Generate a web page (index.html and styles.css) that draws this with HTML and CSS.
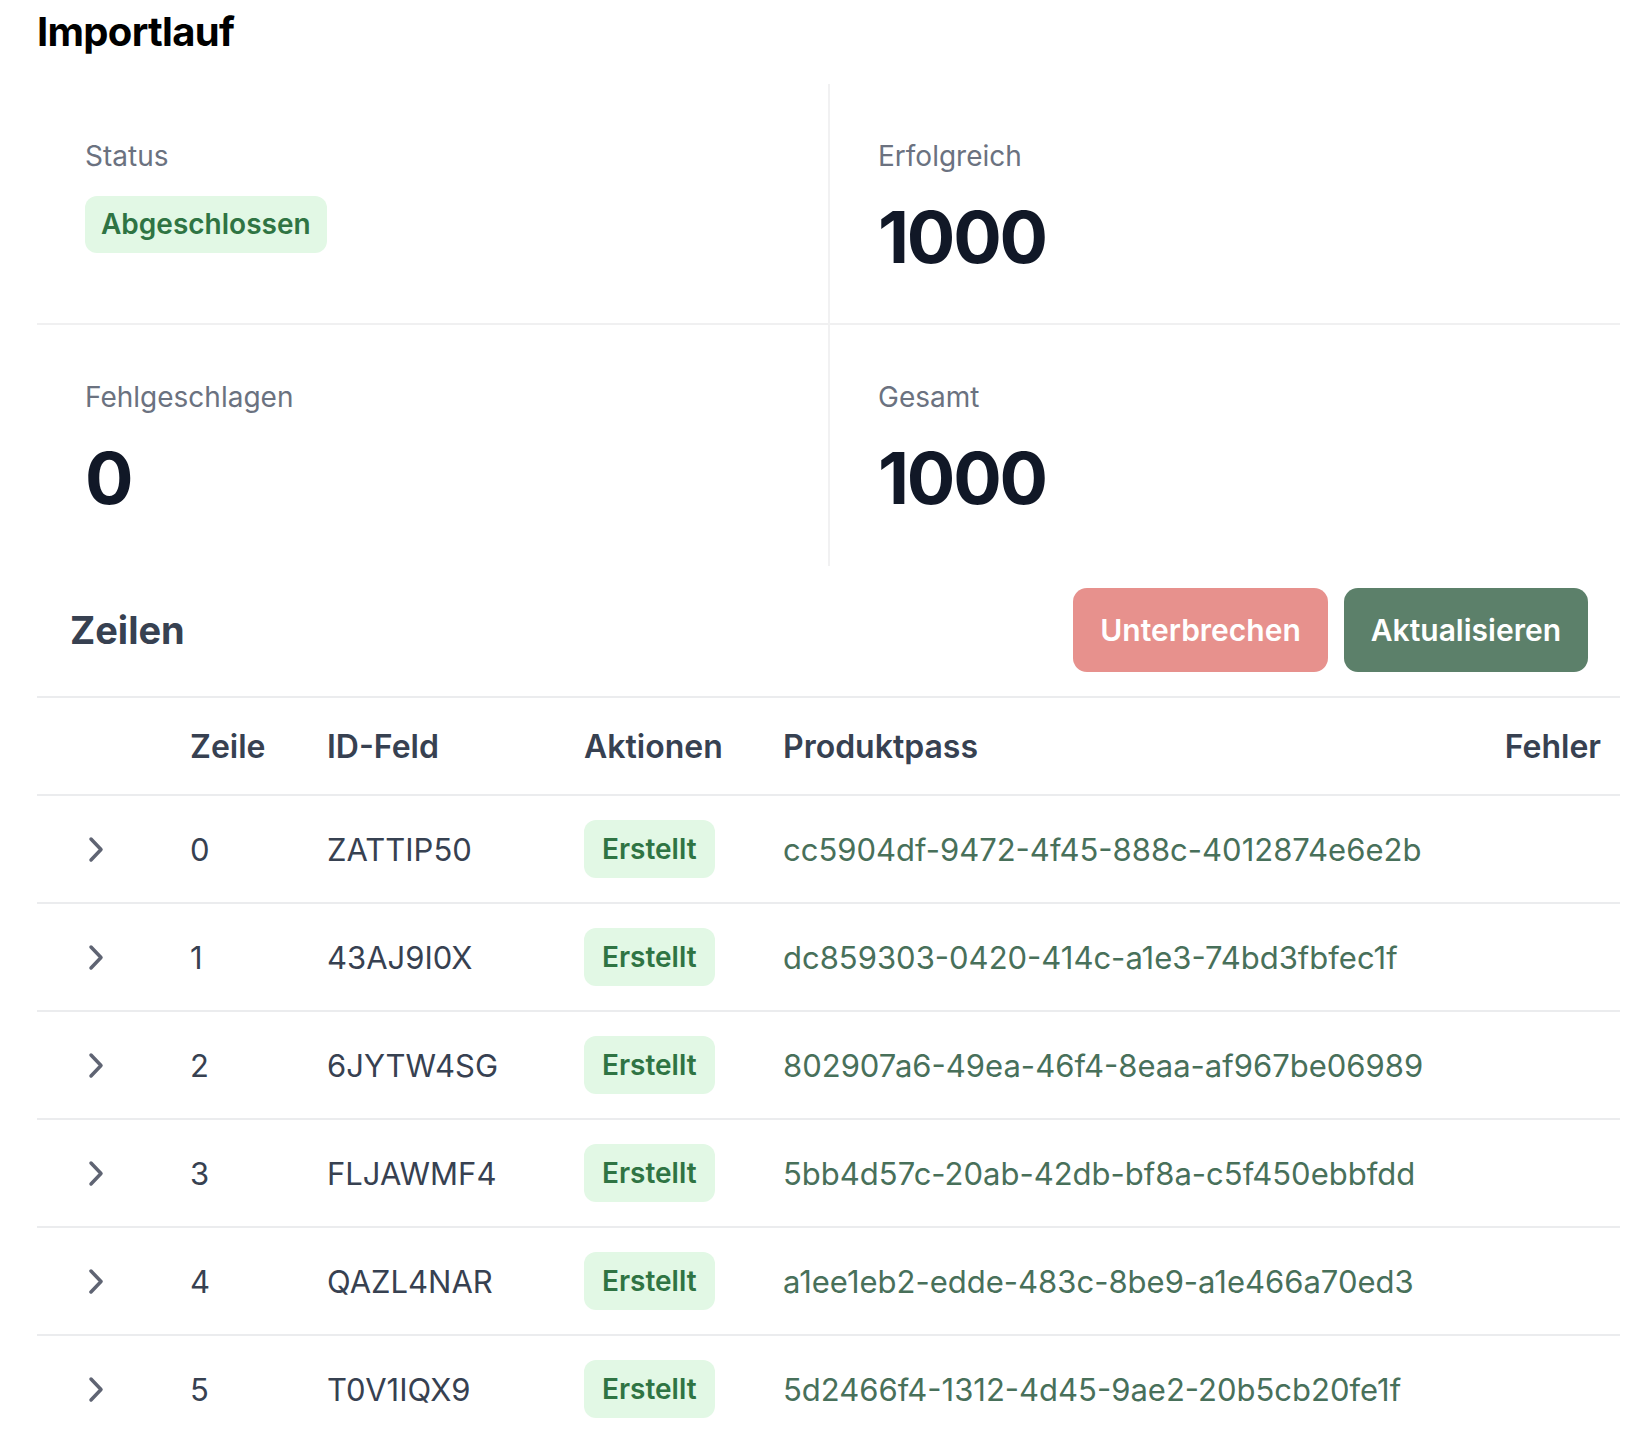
FILE: index.html
```html
<!DOCTYPE html>
<html lang="de">
<head>
<meta charset="utf-8">
<title>Importlauf</title>
<link rel="stylesheet" href="styles.css">
</head>
<body>
<div class="page">
  <h1 class="title">Importlauf</h1>

  <div class="stats">
    <div class="stat">
      <div class="stat-label">Status</div>
      <span class="badge badge-status">Abgeschlossen</span>
    </div>
    <div class="stat">
      <div class="stat-label">Erfolgreich</div>
      <div class="stat-value">1000</div>
    </div>
    <div class="stat">
      <div class="stat-label">Fehlgeschlagen</div>
      <div class="stat-value">0</div>
    </div>
    <div class="stat">
      <div class="stat-label">Gesamt</div>
      <div class="stat-value">1000</div>
    </div>
  </div>

  <div class="section-head">
    <h2 class="section-title">Zeilen</h2>
    <div class="actions">
      <button class="btn btn-danger">Unterbrechen</button>
      <button class="btn btn-primary">Aktualisieren</button>
    </div>
  </div>

  <div class="table">
    <div class="tr thead">
      <div class="td"></div>
      <div class="td">Zeile</div>
      <div class="td">ID-Feld</div>
      <div class="td">Aktionen</div>
      <div class="td">Produktpass</div>
      <div class="td td-right">Fehler</div>
    </div>

    <div class="tr">
      <div class="td td-toggle"><svg class="chev" viewBox="0 0 16 27" width="16" height="27"><polyline points="3,3 13,13.5 3,24"/></svg></div>
      <div class="td">0</div>
      <div class="td">ZATTIP50</div>
      <div class="td"><span class="badge">Erstellt</span></div>
      <div class="td link">cc5904df-9472-4f45-888c-4012874e6e2b</div>
      <div class="td td-right"></div>
    </div>

    <div class="tr">
      <div class="td td-toggle"><svg class="chev" viewBox="0 0 16 27" width="16" height="27"><polyline points="3,3 13,13.5 3,24"/></svg></div>
      <div class="td">1</div>
      <div class="td">43AJ9I0X</div>
      <div class="td"><span class="badge">Erstellt</span></div>
      <div class="td link">dc859303-0420-414c-a1e3-74bd3fbfec1f</div>
      <div class="td td-right"></div>
    </div>

    <div class="tr">
      <div class="td td-toggle"><svg class="chev" viewBox="0 0 16 27" width="16" height="27"><polyline points="3,3 13,13.5 3,24"/></svg></div>
      <div class="td">2</div>
      <div class="td">6JYTW4SG</div>
      <div class="td"><span class="badge">Erstellt</span></div>
      <div class="td link">802907a6-49ea-46f4-8eaa-af967be06989</div>
      <div class="td td-right"></div>
    </div>

    <div class="tr">
      <div class="td td-toggle"><svg class="chev" viewBox="0 0 16 27" width="16" height="27"><polyline points="3,3 13,13.5 3,24"/></svg></div>
      <div class="td">3</div>
      <div class="td">FLJAWMF4</div>
      <div class="td"><span class="badge">Erstellt</span></div>
      <div class="td link">5bb4d57c-20ab-42db-bf8a-c5f450ebbfdd</div>
      <div class="td td-right"></div>
    </div>

    <div class="tr">
      <div class="td td-toggle"><svg class="chev" viewBox="0 0 16 27" width="16" height="27"><polyline points="3,3 13,13.5 3,24"/></svg></div>
      <div class="td">4</div>
      <div class="td">QAZL4NAR</div>
      <div class="td"><span class="badge">Erstellt</span></div>
      <div class="td link">a1ee1eb2-edde-483c-8be9-a1e466a70ed3</div>
      <div class="td td-right"></div>
    </div>

    <div class="tr">
      <div class="td td-toggle"><svg class="chev" viewBox="0 0 16 27" width="16" height="27"><polyline points="3,3 13,13.5 3,24"/></svg></div>
      <div class="td">5</div>
      <div class="td">T0V1IQX9</div>
      <div class="td"><span class="badge">Erstellt</span></div>
      <div class="td link">5d2466f4-1312-4d45-9ae2-20b5cb20fe1f</div>
      <div class="td td-right"></div>
    </div>
  </div>
</div>
</body>
</html>
```

FILE: styles.css
```css
* {
  box-sizing: border-box;
}

html, body {
  margin: 0;
  padding: 0;
  background: #ffffff;
}

body {
  font-family: Inter, "Noto Sans", "Liberation Sans", sans-serif;
  color: #374151;
}

.page {
  padding: 8px 18px 0 37px;
}

.title {
  margin: 0;
  font-size: 40px;
  line-height: 48px;
  font-weight: 700;
  letter-spacing: -0.7px;
  color: #000000;
}

/* ---------- stats ---------- */
.stats {
  margin-top: 28px;
  display: grid;
  grid-template-columns: 793px 1fr;
  grid-template-rows: 241px 241px;
}

.stat {
  padding: 48px 48px 0 48px;
}

.stat:nth-child(odd) {
  border-right: 2px solid #f1f1f2;
}

.stat:nth-child(-n+2) {
  border-bottom: 2px solid #f0f0f1;
}

.stat-label {
  font-size: 28px;
  line-height: 48px;
  color: #6b7280;
}

.stat-value {
  margin-top: 21px;
  font-size: 72px;
  line-height: 72px;
  font-weight: 700;
  letter-spacing: -2.2px;
  color: #111827;
}

.badge {
  display: inline-block;
  height: 58px;
  line-height: 58px;
  padding: 0 18px;
  border-radius: 12px;
  background: #e2f8e5;
  color: #2f7443;
  font-size: 28px;
  font-weight: 600;
}

.badge-status {
  margin-top: 16px;
  height: 57px;
  line-height: 57px;
  padding: 0 16px;
}

/* ---------- section header ---------- */
.section-head {
  display: flex;
  align-items: center;
  justify-content: space-between;
  padding: 22px 32px 24px 33px;
}

.section-title {
  margin: 0;
  font-size: 38px;
  font-weight: 700;
  color: #374151;
}

.actions {
  display: flex;
  gap: 16px;
}

.btn {
  height: 84px;
  padding: 0 27px;
  border: none;
  border-radius: 14px;
  color: #ffffff;
  font-family: inherit;
  font-size: 30px;
  font-weight: 600;
  cursor: pointer;
}

.btn-danger {
  background: #e7918d;
}

.btn-primary {
  background: #5c806a;
}

/* ---------- table ---------- */
.table {
  width: 100%;
}

.tr {
  display: grid;
  grid-template-columns: 129px 137px 259px 197px 1fr 200px;
  align-items: center;
  height: 108px;
  border-top: 2px solid #ebecee;
  font-size: 31px;
  color: #374151;
}

.thead {
  height: 98px;
  font-size: 32px;
  font-weight: 600;
}

.td {
  padding: 0 24px;
  white-space: nowrap;
}

.td-toggle {
  padding: 0 0 0 51px;
  display: flex;
  align-items: center;
}

.td-right {
  text-align: right;
  padding-right: 19px;
}

.chev {
  display: block;
  fill: none;
  stroke: #5f6473;
  stroke-width: 3.5;
  stroke-linecap: round;
  stroke-linejoin: round;
}

.tr .td:nth-child(4) {
  padding-left: 22px;
}

.link {
  font-size: 31px;
  color: #48705a;
}
```
